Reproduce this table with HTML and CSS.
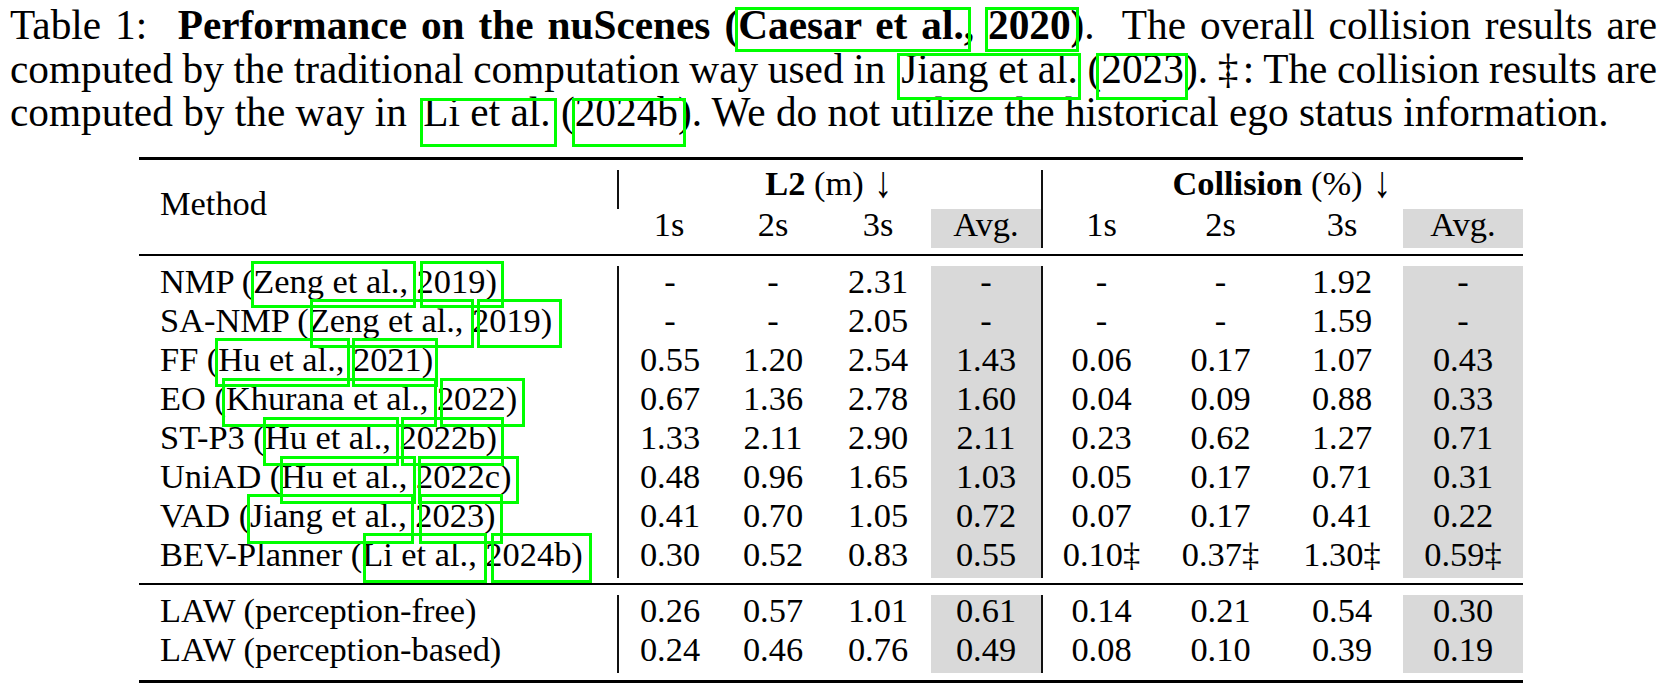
FILE: index.html
```html
<!DOCTYPE html>
<html>
<head>
<meta charset="utf-8">
<link rel="stylesheet" href="styles.css">
</head>
<body>
<div class="page">
  <p class="caption">
    <span class="line"><span class="lbl">Table 1:</span> <b>Performance on the nuScenes (Caesar et al., 2020)</b>.&nbsp; The overall collision results are</span>
    <span class="line tight">computed by the traditional computation way used in <span class="cite">Jiang et al. (2023)</span>. ‡: The collision results are</span>
    <span class="line last">computed by the way in <span class="cite">Li et al. (2024b)</span>. We do not utilize the historical ego status information.</span>
  </p>

  <div class="table">
    <div class="rule thick"></div>
    <div class="grid head">
      <div class="cell method mhead">Method</div>
      <div class="cell group dl gl2"><b>L2</b> (m) <span class="arrow">↓</span></div>
      <div class="cell group dl gcol"><b>Collision</b> (%) <span class="arrow">↓</span></div>
      <div class="cell c">1s</div>
      <div class="cell c">2s</div>
      <div class="cell c">3s</div>
      <div class="cell c g">Avg.</div>
      <div class="cell c dl">1s</div>
      <div class="cell c">2s</div>
      <div class="cell c">3s</div>
      <div class="cell c g">Avg.</div>
    </div>
    <div class="rule thin"></div>
    <div class="grid body">
      <div class="cell method">NMP (Zeng et al., 2019)</div>
      <div class="cell c dl">-</div><div class="cell c">-</div><div class="cell c">2.31</div><div class="cell c g">-</div>
      <div class="cell c dl">-</div><div class="cell c">-</div><div class="cell c">1.92</div><div class="cell c g">-</div>

      <div class="cell method">SA-NMP (Zeng et al., 2019)</div>
      <div class="cell c dl">-</div><div class="cell c">-</div><div class="cell c">2.05</div><div class="cell c g">-</div>
      <div class="cell c dl">-</div><div class="cell c">-</div><div class="cell c">1.59</div><div class="cell c g">-</div>

      <div class="cell method">FF (Hu et al., 2021)</div>
      <div class="cell c dl">0.55</div><div class="cell c">1.20</div><div class="cell c">2.54</div><div class="cell c g">1.43</div>
      <div class="cell c dl">0.06</div><div class="cell c">0.17</div><div class="cell c">1.07</div><div class="cell c g">0.43</div>

      <div class="cell method">EO (Khurana et al., 2022)</div>
      <div class="cell c dl">0.67</div><div class="cell c">1.36</div><div class="cell c">2.78</div><div class="cell c g">1.60</div>
      <div class="cell c dl">0.04</div><div class="cell c">0.09</div><div class="cell c">0.88</div><div class="cell c g">0.33</div>

      <div class="cell method">ST-P3 (Hu et al., 2022b)</div>
      <div class="cell c dl">1.33</div><div class="cell c">2.11</div><div class="cell c">2.90</div><div class="cell c g">2.11</div>
      <div class="cell c dl">0.23</div><div class="cell c">0.62</div><div class="cell c">1.27</div><div class="cell c g">0.71</div>

      <div class="cell method">UniAD (Hu et al., 2022c)</div>
      <div class="cell c dl">0.48</div><div class="cell c">0.96</div><div class="cell c">1.65</div><div class="cell c g">1.03</div>
      <div class="cell c dl">0.05</div><div class="cell c">0.17</div><div class="cell c">0.71</div><div class="cell c g">0.31</div>

      <div class="cell method">VAD (Jiang et al., 2023)</div>
      <div class="cell c dl">0.41</div><div class="cell c">0.70</div><div class="cell c">1.05</div><div class="cell c g">0.72</div>
      <div class="cell c dl">0.07</div><div class="cell c">0.17</div><div class="cell c">0.41</div><div class="cell c g">0.22</div>

      <div class="cell method">BEV-Planner (Li et al., 2024b)</div>
      <div class="cell c dl">0.30</div><div class="cell c">0.52</div><div class="cell c">0.83</div><div class="cell c g">0.55</div>
      <div class="cell c dl">0.10‡</div><div class="cell c">0.37‡</div><div class="cell c">1.30‡</div><div class="cell c g">0.59‡</div>
    </div>
    <div class="rule thin"></div>
    <div class="grid law">
      <div class="cell method">LAW (perception-free)</div>
      <div class="cell c dl">0.26</div><div class="cell c">0.57</div><div class="cell c">1.01</div><div class="cell c g">0.61</div>
      <div class="cell c dl">0.14</div><div class="cell c">0.21</div><div class="cell c">0.54</div><div class="cell c g">0.30</div>

      <div class="cell method">LAW (perception-based)</div>
      <div class="cell c dl">0.24</div><div class="cell c">0.46</div><div class="cell c">0.76</div><div class="cell c g">0.49</div>
      <div class="cell c dl">0.08</div><div class="cell c">0.10</div><div class="cell c">0.39</div><div class="cell c g">0.19</div>
    </div>
    <div class="rule thick"></div>
  </div>

  <div class="links">
    <div class="lk c1"></div><div class="lk c2"></div>
    <div class="lk c3"></div><div class="lk c4"></div>
    <div class="lk c5"></div><div class="lk c6"></div>
    <div class="lk t1"></div><div class="lk t2"></div>
    <div class="lk t3"></div><div class="lk t4"></div>
    <div class="lk t5"></div><div class="lk t6"></div>
    <div class="lk t7"></div><div class="lk t8"></div>
    <div class="lk t9"></div><div class="lk t10"></div>
    <div class="lk t11"></div><div class="lk t12"></div>
    <div class="lk t13"></div><div class="lk t14"></div>
    <div class="lk t15"></div><div class="lk t16"></div>
  </div>
</div>
</body>
</html>
```

FILE: styles.css
```css
html, body {
  margin: 0;
  padding: 0;
  background: #fff;
}
body {
  font-family: "Liberation Serif", "Times New Roman", serif;
  color: #000;
}
.page {
  position: relative;
  width: 1665px;
  height: 693px;
  overflow: hidden;
  padding-top: 4px;
  box-sizing: border-box;
}

/* caption */
.caption {
  margin: 0 0 0 10px;
  width: 1647px;
  font-size: 41.3px;
  line-height: 43.7px;
}
.caption .line {
  display: block;
  text-align: justify;
  text-align-last: justify;
}
.caption .line.tight {
  word-spacing: -5px;
}
.caption .line.last {
  text-align: left;
  text-align-last: left;
}
.caption .lbl {
  margin-right: 0.4em;
}
.caption .cite {
  margin-left: 0.15em;
}

/* table */
.table {
  margin: 22px 0 0 139px;
  width: 1384px;
  font-size: 34.4px;
}
.rule {
  background: #000;
}
.rule.thick { height: 3px; }
.rule.thin { height: 2px; }

.grid {
  display: grid;
  grid-template-columns: 478px 104px 104px 106px 110px 119px 121px 122px 120px;
  grid-auto-rows: 39px;
  line-height: 31px;
}
.head { padding: 10px 0 6px; }
.body { padding: 10px 0 5px; }
.law  { padding: 10px 0 7px; }

.cell {
  box-sizing: border-box;
  white-space: nowrap;
}
.method {
  padding-left: 21px;
  text-align: left;
}
.mhead {
  grid-row: 1 / 3;
  padding-top: 18px;
}
.group {
  text-align: center;
  line-height: 27px;
}
.arrow {
  display: inline-block;
  font-size: 1.3em;
  line-height: 0;
  transform: scaleX(0.8) translateY(2px);
}
.gl2 { grid-column: 2 / 6; grid-row: 1; }
.gcol { grid-column: 6 / 10; grid-row: 1; }
.c { text-align: center; }
.g { background: #d9d9d9; }
.dl { border-left: 2px solid #111; }

/* hyperlink borders drawn over the text */
.links {
  position: absolute;
  left: 0;
  top: 0;
  width: 0;
  height: 0;
}
.lk {
  position: absolute;
  border: 3px solid #00ff00;
  box-sizing: border-box;
}
.c1 { left: 735px; top: 7px; width: 236px; height: 45px; }
.c2 { left: 985px; top: 7px; width: 94px; height: 45px; }
.c3 { left: 897px; top: 53px; width: 184px; height: 47px; }
.c4 { left: 1096px; top: 53px; width: 92px; height: 47px; }
.c5 { left: 420px; top: 98px; width: 137px; height: 49px; }
.c6 { left: 572px; top: 98px; width: 114px; height: 49px; }

.t1  { left: 251px; top: 261px; width: 165px; height: 47px; }
.t2  { left: 420px; top: 261px; width: 84px;  height: 47px; }
.t3  { left: 310px; top: 299px; width: 164px; height: 49px; }
.t4  { left: 477px; top: 299px; width: 85px;  height: 49px; }
.t5  { left: 215px; top: 338px; width: 135px; height: 49px; }
.t6  { left: 352px; top: 338px; width: 86px;  height: 49px; }
.t7  { left: 222px; top: 378px; width: 215px; height: 49px; }
.t8  { left: 440px; top: 378px; width: 85px;  height: 49px; }
.t9  { left: 263px; top: 417px; width: 136px; height: 49px; }
.t10 { left: 401px; top: 417px; width: 103px; height: 49px; }
.t11 { left: 280px; top: 456px; width: 136px; height: 48px; }
.t12 { left: 418px; top: 456px; width: 101px; height: 48px; }
.t13 { left: 247px; top: 494px; width: 167px; height: 50px; }
.t14 { left: 419px; top: 494px; width: 84px;  height: 50px; }
.t15 { left: 363px; top: 533px; width: 124px; height: 50px; }
.t16 { left: 491px; top: 533px; width: 101px; height: 50px; }
```
